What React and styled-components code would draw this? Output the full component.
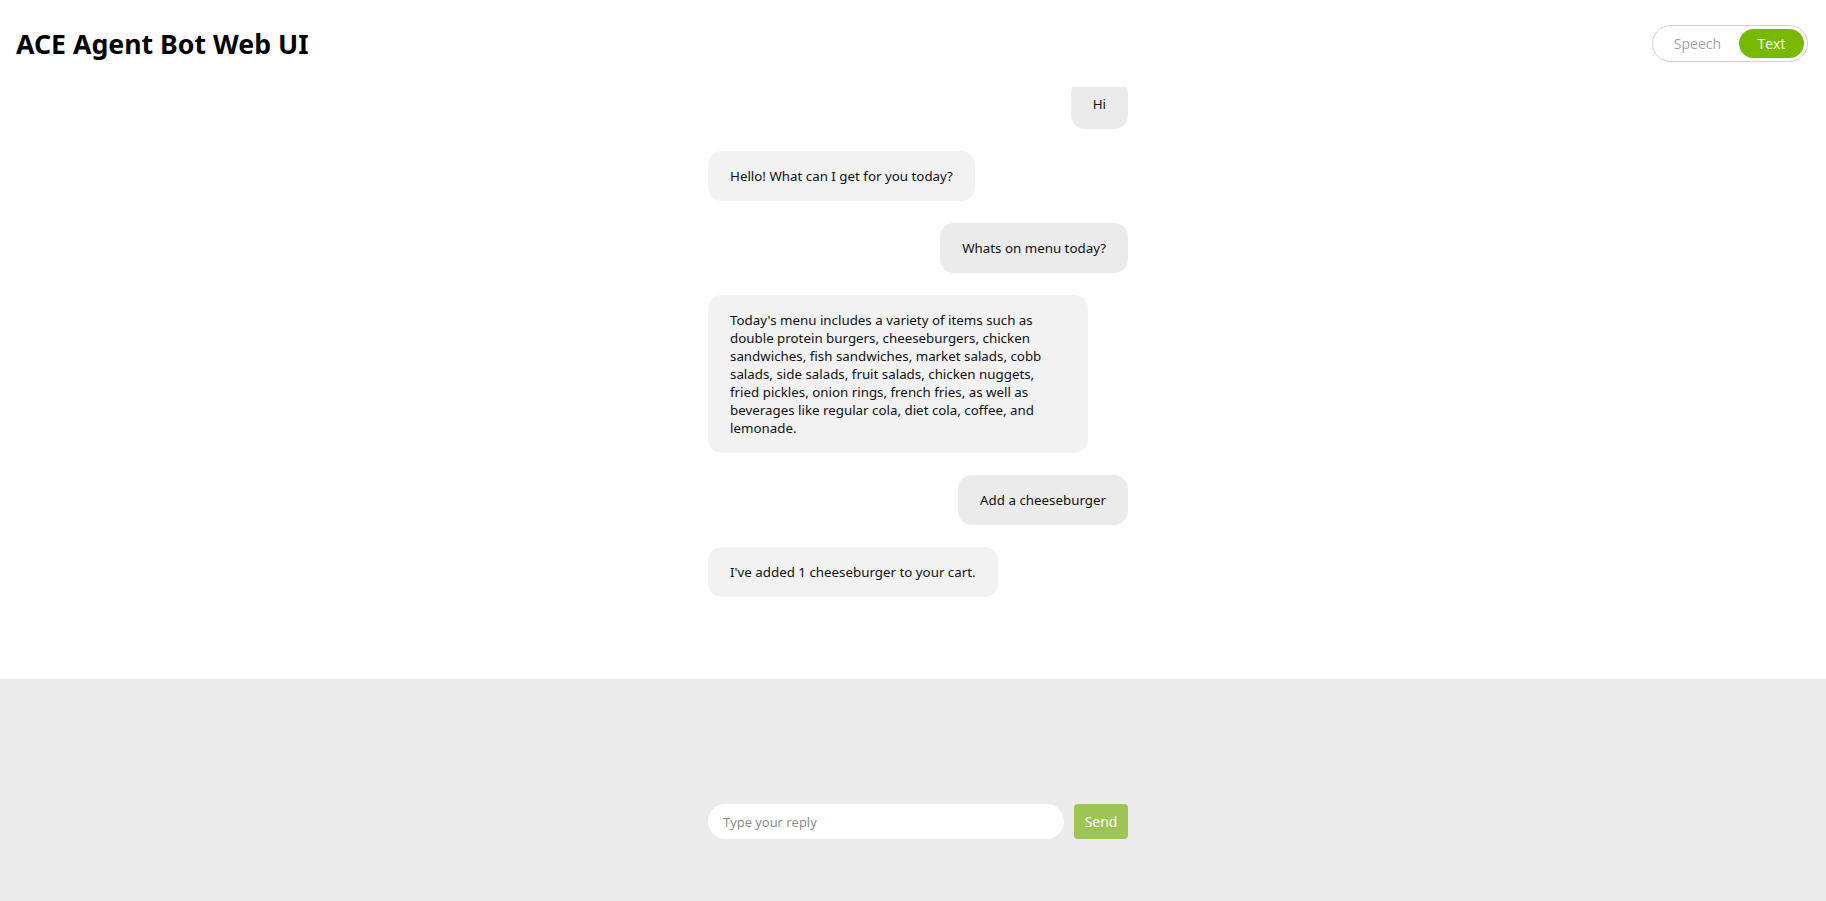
import React from "react";
import styled, { createGlobalStyle } from "styled-components";

const Global = createGlobalStyle`
  html, body { margin: 0; padding: 0; height: 100%; background: #fff; }
  body { font-family: "Noto Sans", "Open Sans", sans-serif; color: #111; }
  #root { height: 100%; }
`;

const Page = styled.div`
  height: 901px;
  display: flex;
  flex-direction: column;
  overflow: hidden;
`;

const Header = styled.header`
  height: 87px;
  flex: 0 0 87px;
  display: flex;
  align-items: center;
  justify-content: space-between;
  padding: 0 18px 0 16px;
  box-sizing: border-box;
`;

const Title = styled.h1`
  margin: 0;
  font-family: "Noto Sans", sans-serif;
  font-weight: 700;
  font-size: 26.7px;
  color: #000;
`;

const Toggle = styled.div`
  display: flex;
  align-items: center;
  width: 156px;
  height: 37px;
  box-sizing: border-box;
  border: 1px solid #cfcfcf;
  border-radius: 19px;
  padding: 3px;
`;

const ToggleOption = styled.button`
  flex: ${(p) => (p.$active ? "0 0 65px" : "1 1 auto")};
  height: 29px;
  border: none;
  border-radius: 15px;
  background: ${(p) => (p.$active ? "#76b900" : "transparent")};
  color: ${(p) => (p.$active ? "#fff" : "#a3a3a3")};
  font-family: "Open Sans", sans-serif;
  font-size: 14px;
  padding: 0;
  cursor: pointer;
`;

const ChatArea = styled.main`
  flex: 1 1 auto;
  display: flex;
  flex-direction: column;
  justify-content: flex-end;
  overflow: hidden;
  padding-bottom: 82px;
  box-sizing: border-box;
`;

const Column = styled.div`
  width: 420px;
  margin-left: 708px;
  display: flex;
  flex-direction: column;
  gap: 22px;
`;

const Bubble = styled.div`
  align-self: ${(p) => (p.$user ? "flex-end" : "flex-start")};
  max-width: 336px;
  padding: 16px 22px;
  border-radius: 14px;
  background: ${(p) => (p.$user ? "#ebebeb" : "#f2f2f2")};
  font-size: 13.33px;
  line-height: 18px;
  color: #111;
`;

const Footer = styled.footer`
  flex: 0 0 222px;
  height: 222px;
  background: #ebebeb;
  box-sizing: border-box;
  padding-top: 125px;
`;

const InputRow = styled.form`
  width: 420px;
  margin-left: 708px;
  display: flex;
  gap: 10px;
`;

const Input = styled.input`
  flex: 1 1 auto;
  height: 35px;
  box-sizing: border-box;
  border: none;
  border-radius: 18px;
  background: #fff;
  padding: 0 15px;
  font-family: "Open Sans", sans-serif;
  font-size: 13px;
  outline: none;
  &::placeholder { color: #8a8a8a; }
`;

const SendButton = styled.button`
  flex: 0 0 54px;
  height: 35px;
  border: none;
  border-radius: 4px;
  background: #9cc555;
  color: #fff;
  font-family: "Open Sans", sans-serif;
  font-size: 14px;
  padding: 0;
`;

const messages = [
  { user: true, text: "Hi" },
  { user: false, text: "Hello! What can I get for you today?" },
  { user: true, text: "Whats on menu today?" },
  {
    user: false,
    text: "Today's menu includes a variety of items such as double protein burgers, cheeseburgers, chicken sandwiches, fish sandwiches, market salads, cobb salads, side salads, fruit salads, chicken nuggets, fried pickles, onion rings, french fries, as well as beverages like regular cola, diet cola, coffee, and lemonade.",
  },
  { user: true, text: "Add a cheeseburger" },
  { user: false, text: "I've added 1 cheeseburger to your cart." },
];

export default function App() {
  return (
    <>
      <Global />
      <Page>
        <Header>
          <Title>ACE Agent Bot Web UI</Title>
          <Toggle>
            <ToggleOption>Speech</ToggleOption>
            <ToggleOption $active>Text</ToggleOption>
          </Toggle>
        </Header>
        <ChatArea>
          <Column>
            {messages.map((m, i) => (
              <Bubble key={i} $user={m.user}>
                {m.text}
              </Bubble>
            ))}
          </Column>
        </ChatArea>
        <Footer>
          <InputRow onSubmit={(e) => e.preventDefault()}>
            <Input placeholder="Type your reply" />
            <SendButton type="submit">Send</SendButton>
          </InputRow>
        </Footer>
      </Page>
    </>
  );
}
